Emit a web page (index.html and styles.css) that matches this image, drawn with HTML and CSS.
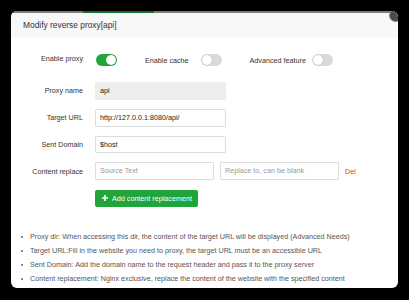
FILE: index.html
```html
<!DOCTYPE html>
<html>
<head>
<meta charset="utf-8">
<link rel="stylesheet" href="styles.css">
</head>
<body>
<div class="dialog">
  <div class="topbar"></div>
  <span class="close"></span>
  <div class="header">Modify reverse proxy[api]</div>
  <div class="body">
    <div class="row switches">
      <span class="label">Enable proxy</span>
      <div class="controls">
        <span class="switch on"></span>
        <span class="sw-label cache">Enable cache</span>
        <span class="switch"></span>
        <span class="sw-label adv">Advanced feature</span>
        <span class="switch adv-switch"></span>
      </div>
    </div>
    <div class="row">
      <span class="label">Proxy name</span>
      <div class="controls"><div class="input disabled">api</div></div>
    </div>
    <div class="row">
      <span class="label">Target URL</span>
      <div class="controls"><div class="input">http://127.0.0.1:8080/api/</div></div>
    </div>
    <div class="row">
      <span class="label">Sent Domain</span>
      <div class="controls"><div class="input">$host</div></div>
    </div>
    <div class="row">
      <span class="label">Content replace</span>
      <div class="controls">
        <div class="input half placeholder">Source Text</div>
        <div class="input half placeholder">Replace to, can be blank</div>
        <span class="del">Del</span>
      </div>
    </div>
    <div class="row">
      <span class="label"></span>
      <div class="controls">
        <button class="btn"><svg class="plus" viewBox="0 0 10 10" width="6" height="6"><path d="M3.6 0h2.8v3.6H10v2.8H6.4V10H3.6V6.4H0V3.6h3.6z" fill="#fff"/></svg>Add content replacement</button>
      </div>
    </div>
    <ul class="tips">
      <li>Proxy dir: When accessing this dir, the content of the target URL will be displayed (Advanced Needs)</li>
      <li>Target URL:Fill in the website you need to proxy, the target URL must be an accessible URL</li>
      <li>Sent Domain: Add the domain name to the request header and pass it to the proxy server</li>
      <li>Content replacement: Nginx exclusive, replace the content of the website with the specified content</li>
    </ul>
  </div>
</div>
</body>
</html>
```

FILE: styles.css
```css
html, body {
  margin: 0;
  padding: 0;
  background: #000;
  height: 300px;
  overflow: hidden;
}
body {
  padding: 11px 0 0 11px;
  box-sizing: border-box;
  font-family: "Liberation Sans", Arial, sans-serif;
}
.dialog {
  position: relative;
  width: 387px;
  height: 277px;
  background: #fff;
  border-radius: 6px;
  overflow: hidden;
  display: flex;
  flex-direction: column;
}
.topbar {
  height: 2px;
  flex: none;
  background: linear-gradient(to right, #7b7b7b 0, #7b7b7b 72px, #17702a 72px, #17702a 143px, #7b7b7b 143px);
}
.close {
  position: absolute;
  top: -1px;
  right: -3px;
  width: 11px;
  height: 11px;
  border-radius: 50%;
  background: #4d4d4d;
  box-shadow: 0 0 0 1px #8a8a8a;
}
.header {
  height: 25px;
  flex: none;
  background: #f8f8f8;
  color: #333;
  font-size: 8.4px;
  line-height: 25px;
  padding-left: 12px;
}
.body {
  flex: 1;
  padding-top: 15px;
}
.row {
  display: flex;
  align-items: center;
  height: 17.8px;
  margin-bottom: 9px;
}
.row.switches {
  height: 14px;
  margin-bottom: 15px;
}
.label {
  width: 72px;
  flex: none;
  text-align: right;
  font-size: 7.2px;
  color: #333;
  padding-right: 12px;
}
.switches .label {
  position: relative;
  top: -2px;
}
.controls {
  display: flex;
  align-items: center;
  height: 100%;
}
.switch {
  position: relative;
  display: inline-block;
  width: 21px;
  height: 12px;
  border-radius: 6px;
  background: #d9d9d9;
  margin-left: 1px;
}
.switch::after {
  content: "";
  position: absolute;
  top: 1px;
  left: 1px;
  width: 10px;
  height: 10px;
  border-radius: 50%;
  background: #fff;
  box-shadow: 0 0 1px rgba(0,0,0,0.3);
}
.switch.on {
  background: #20a53a;
}
.switch.on::after {
  left: 10px;
}
.sw-label {
  font-size: 7.2px;
  color: #333;
}
.sw-label.cache {
  margin-left: 28px;
  margin-right: 11px;
}
.sw-label.adv {
  margin-left: 28px;
  margin-right: 5px;
}
.input {
  box-sizing: border-box;
  width: 131px;
  height: 17.8px;
  border: 1px solid #ddd;
  border-radius: 1px;
  font-size: 7.2px;
  line-height: 15.8px;
  padding-left: 4px;
  color: #222;
  background: #fff;
}
.input.disabled {
  background: #eee;
  border-color: #eee;
}
.input.half {
  width: 119px;
  margin-right: 6px;
}
.input.placeholder {
  color: #999;
}
.del {
  font-size: 7.2px;
  color: #ef2b2b;
}
.btn {
  box-sizing: border-box;
  height: 17px;
  width: 103px;
  border: none;
  border-radius: 2px;
  background: #20a53a;
  color: #fff;
  font-family: "Liberation Sans", Arial, sans-serif;
  font-size: 7.2px;
  padding: 0 0 0 7px;
  display: flex;
  align-items: center;
}
.plus {
  margin-right: 4px;
}
.tips {
  margin: 23px 0 0;
  padding: 0 0 0 19px;
  font-size: 7.2px;
  color: #555;
  list-style: none;
}
.tips li {
  line-height: 14px;
  position: relative;
}
.tips li::before {
  content: "";
  position: absolute;
  left: -9px;
  top: 6px;
  width: 2px;
  height: 2px;
  background: #888;
}
```
